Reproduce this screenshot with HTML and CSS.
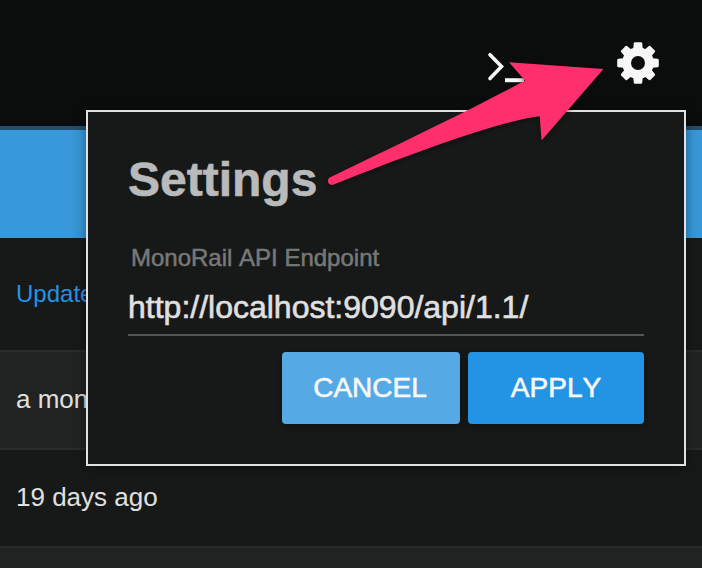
FILE: index.html
```
<!DOCTYPE html>
<html lang="en">
<head>
<meta charset="utf-8">
<title>Settings</title>
<link rel="stylesheet" href="styles.css">
</head>
<body>
<header class="topbar">
  <svg class="terminal" width="40" height="40" viewBox="0 0 40 40" fill="none" stroke="#f7f7f7" stroke-width="3.6"><path stroke-linecap="round" d="M5 7.700 16.500 19.600 5 31.500"/><path stroke-width="4" d="M20 33.200H39"/></svg>
  <svg class="gear" width="42" height="42" viewBox="-21 -21 42 42">
    <defs><path id="tooth" d="M-5-12-4.2-19.7Q-4-20.8-3-20.8H3Q4-20.8 4.2-19.7L5-12Z"/></defs>
    <g fill="#f7f7f7">
      <use href="#tooth"/><use href="#tooth" transform="rotate(45)"/><use href="#tooth" transform="rotate(90)"/><use href="#tooth" transform="rotate(135)"/>
      <use href="#tooth" transform="rotate(180)"/><use href="#tooth" transform="rotate(225)"/><use href="#tooth" transform="rotate(270)"/><use href="#tooth" transform="rotate(315)"/>
      <path fill-rule="evenodd" d="M0-15.8A15.8 15.8 0 1 1 0 15.8 15.8 15.8 0 1 1 0-15.8ZM0-7A7 7 0 1 0 0 7 7 7 0 1 0 0-7Z"/>
    </g>
  </svg>
</header>
<div class="banner"></div>
<main class="table">
  <div class="row heading">Updated</div>
  <div class="row shaded">a month ago</div>
  <div class="row">19 days ago</div>
  <div class="row shaded last"></div>
</main>
<section class="dialog">
  <h1>Settings</h1>
  <label>MonoRail API Endpoint</label>
  <div class="field">http://localhost:9090/api/1.1/</div>
  <div class="actions">
    <button class="cancel">CANCEL</button>
    <button class="apply">APPLY</button>
  </div>
</section>
<svg class="arrow" width="702" height="568" viewBox="0 0 702 568"><path fill="#ff2f6d" d="M330.3 177.3C420 134 480 105 525 80.5L509 62.2 603.5 69 541.5 140.5 539.7 116.2C500 121 410 154 333 184.800C328.500 186 325.500 180 330.300 177.300Z"/></svg>
</body>
</html>
```
FILE: styles.css
```
* { box-sizing: border-box; }
body {
  margin: 0;
  width: 702px;
  height: 568px;
  overflow: hidden;
  position: relative;
  background: #171918;
  color: #e0e0e0;
  font-family: "Liberation Sans", Arial, sans-serif;
  font-kerning: none;
}
.topbar {
  height: 126px;
  display: flex;
  justify-content: flex-end;
  gap: 92px;
  padding: 42px 43px 0 0;
  background: #0b0d0c;
}
.terminal { margin-top: 5px; }
.banner {
  height: 112px;
  border-top: 4px solid #1f4f72;
  background: #3998d9;
}
.row {
  height: 98px;
  padding-left: 16px;
  border-bottom: 2px solid #292b2a;
  font-size: 26px;
  line-height: 95px;
}
.heading {
  height: 114px;
  color: #2393e5;
  font-size: 24px;
  line-height: 112px;
}
.shaded { background: #212322; }
.last {
  height: 20px;
  border-bottom: 0;
}
.dialog {
  position: absolute;
  left: 86px;
  top: 110px;
  width: 600px;
  height: 356px;
  padding: 40px;
  border: 2px solid #e0e2e1;
  background: #171918;
  box-shadow: 0 2px 12px rgba(0, 0, 0, .4);
}
h1 {
  margin: 0;
  font-size: 48px;
  line-height: 56px;
  color: #b9babc;
  -webkit-text-stroke: .6px #b9babc;
}
label {
  display: block;
  margin: 36px 0 0 3px;
  font-size: 24px;
  line-height: 28px;
  color: #777978;
  -webkit-text-stroke: .5px #777978;
}
.field {
  height: 64px;
  border-bottom: 2px solid #535554;
  font-size: 32px;
  line-height: 71px;
  -webkit-text-stroke: .6px #e0e0e0;
}
.actions {
  display: flex;
  justify-content: flex-end;
  gap: 8px;
  margin-top: 16px;
}
button {
  height: 72px;
  padding: 0;
  border: 0;
  border-radius: 4px;
  font: 28px/72px "Liberation Sans", Arial, sans-serif;
  font-kerning: none;
  color: #f7f7f7;
  -webkit-text-stroke: .6px #f7f7f7;
  box-shadow: 0 2px 8px rgba(0, 0, 0, .3);
}
.cancel {
  width: 178px;
  padding-right: 2px;
  background: #55aae6;
}
.apply { width: 176px; background: #2393e4; }
.arrow {
  position: absolute;
  left: 0;
  top: 0;
  pointer-events: none;
  filter: drop-shadow(0 2px 2px rgba(0, 0, 0, .45));
}
```
